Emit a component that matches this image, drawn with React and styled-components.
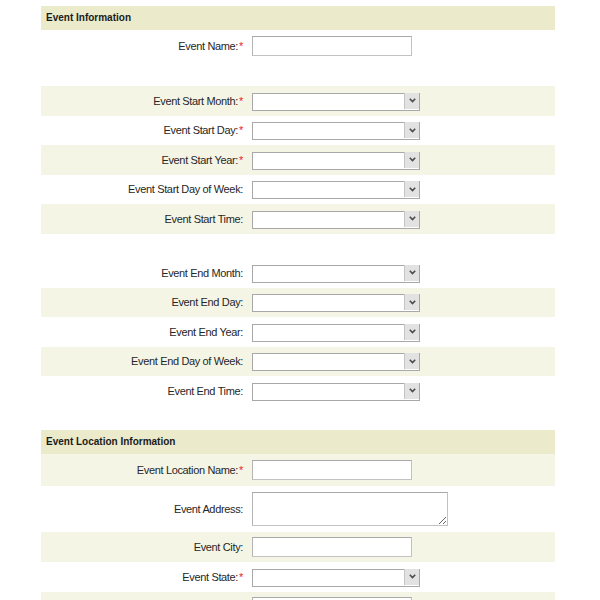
import styled, { createGlobalStyle } from "styled-components";

// Global
const GlobalStyle = createGlobalStyle`
  body {
    margin: 0;
    background: #ffffff;
    font-family: "Liberation Sans", Arial, sans-serif;
  }
`;

const startRows = [
  { label: "Event Start Month:", req: true },
  { label: "Event Start Day:", req: true },
  { label: "Event Start Year:", req: true },
  { label: "Event Start Day of Week:" },
  { label: "Event Start Time:" },
];

const endRows = [
  { label: "Event End Month:" },
  { label: "Event End Day:" },
  { label: "Event End Year:" },
  { label: "Event End Day of Week:" },
  { label: "Event End Time:" },
];

const Chevron = () => (
  <svg width="7" height="5" viewBox="0 0 7 5">
    <path d="M0.8 0.8 L3.5 3.6 L6.2 0.8" fill="none" stroke="#4a4a4a" strokeWidth="1.6" />
  </svg>
);

const SelectField = () => (
  <SelectWrap>
    <Select defaultValue="">
      <option value=""></option>
    </Select>
    <ArrowBox>
      <Chevron />
    </ArrowBox>
  </SelectWrap>
);

const Label = ({ text, req }) => (
  <LabelCell>
    {text}
    {req && <Req>*</Req>}
  </LabelCell>
);

const EventForm = () => {
  return (
    <Form>
      <GlobalStyle />
      <SectionHeader>Event Information</SectionHeader>
      <Row $h={31}>
        <Label text="Event Name:" req />
        <TextInput type="text" />
      </Row>
      <Spacer $h={25} />
      {startRows.map((r, i) => (
        <Row key={r.label} $h={29.5} $tinted={i % 2 === 0}>
          <Label text={r.label} req={r.req} />
          <SelectField />
        </Row>
      ))}
      <Spacer $h={24.5} />
      {endRows.map((r, i) => (
        <Row key={r.label} $h={29.5} $tinted={i % 2 === 1}>
          <Label text={r.label} req={r.req} />
          <SelectField />
        </Row>
      ))}
      <Spacer $h={24.5} />
      <SectionHeader>Event Location Information</SectionHeader>
      <Row $h={31.5} $tinted>
        <Label text="Event Location Name:" req />
        <TextInput type="text" />
      </Row>
      <Row $h={46}>
        <Label text="Event Address:" />
        <TextArea />
      </Row>
      <Row $h={30.5} $tinted>
        <Label text="Event City:" />
        <TextInput type="text" />
      </Row>
      <Row $h={29.5}>
        <Label text="Event State:" req />
        <SelectField />
      </Row>
      <Row $h={30} $tinted>
        <LabelCell />
        <TextInput type="text" />
      </Row>
    </Form>
  );
};

// Styled Components
const Form = styled.div`
  width: 514px;
  padding: 6px 0 0 41px;
  color: #262626;
`;

const SectionHeader = styled.div`
  height: 24px;
  line-height: 24px;
  padding-left: 5px;
  background: #ebeacb;
  font-size: 10px;
  font-weight: bold;
  color: #1a1a1a;
`;

const Row = styled.div`
  height: ${(p) => p.$h}px;
  display: flex;
  align-items: center;
  background: ${(p) => (p.$tinted ? "#f5f5e6" : "#ffffff")};
`;

const Spacer = styled.div`
  height: ${(p) => p.$h}px;
`;

const LabelCell = styled.div`
  width: 202px;
  margin-right: 9px;
  text-align: right;
  font-size: 11px;
  letter-spacing: -0.35px;
  white-space: nowrap;
`;

const Req = styled.span`
  color: #e8222c;
  margin-left: 1px;
`;

const TextInput = styled.input`
  box-sizing: border-box;
  width: 160px;
  height: 20px;
  margin: 0;
  padding: 1px 3px;
  border: 1px solid #c2c2c2;
  border-top-color: #a9a9a9;
  border-left-color: #b4b4b4;
  background: #ffffff;
  font: 11px "Liberation Sans", Arial, sans-serif;
  outline: none;
`;

const TextArea = styled.textarea`
  box-sizing: border-box;
  width: 196px;
  height: 34px;
  margin: 0;
  padding: 2px 3px;
  border: 1px solid #c2c2c2;
  border-top-color: #a9a9a9;
  border-left-color: #b4b4b4;
  font: 11px "Liberation Sans", Arial, sans-serif;
  outline: none;
`;

const SelectWrap = styled.div`
  position: relative;
  width: 168px;
  height: 18px;
`;

const Select = styled.select`
  box-sizing: border-box;
  width: 100%;
  height: 100%;
  margin: 0;
  padding: 0 2px;
  appearance: none;
  border: 1px solid #a8a8a8;
  border-radius: 0;
  background: #ffffff;
  font: 11px "Liberation Sans", Arial, sans-serif;
  outline: none;
`;

const ArrowBox = styled.span`
  position: absolute;
  top: 1px;
  right: 1px;
  width: 15px;
  height: 16px;
  box-sizing: border-box;
  display: flex;
  align-items: center;
  justify-content: center;
  background: #e2e2e2;
  border-left: 1px solid #c4c4c4;
  pointer-events: none;
`;

export default EventForm;
